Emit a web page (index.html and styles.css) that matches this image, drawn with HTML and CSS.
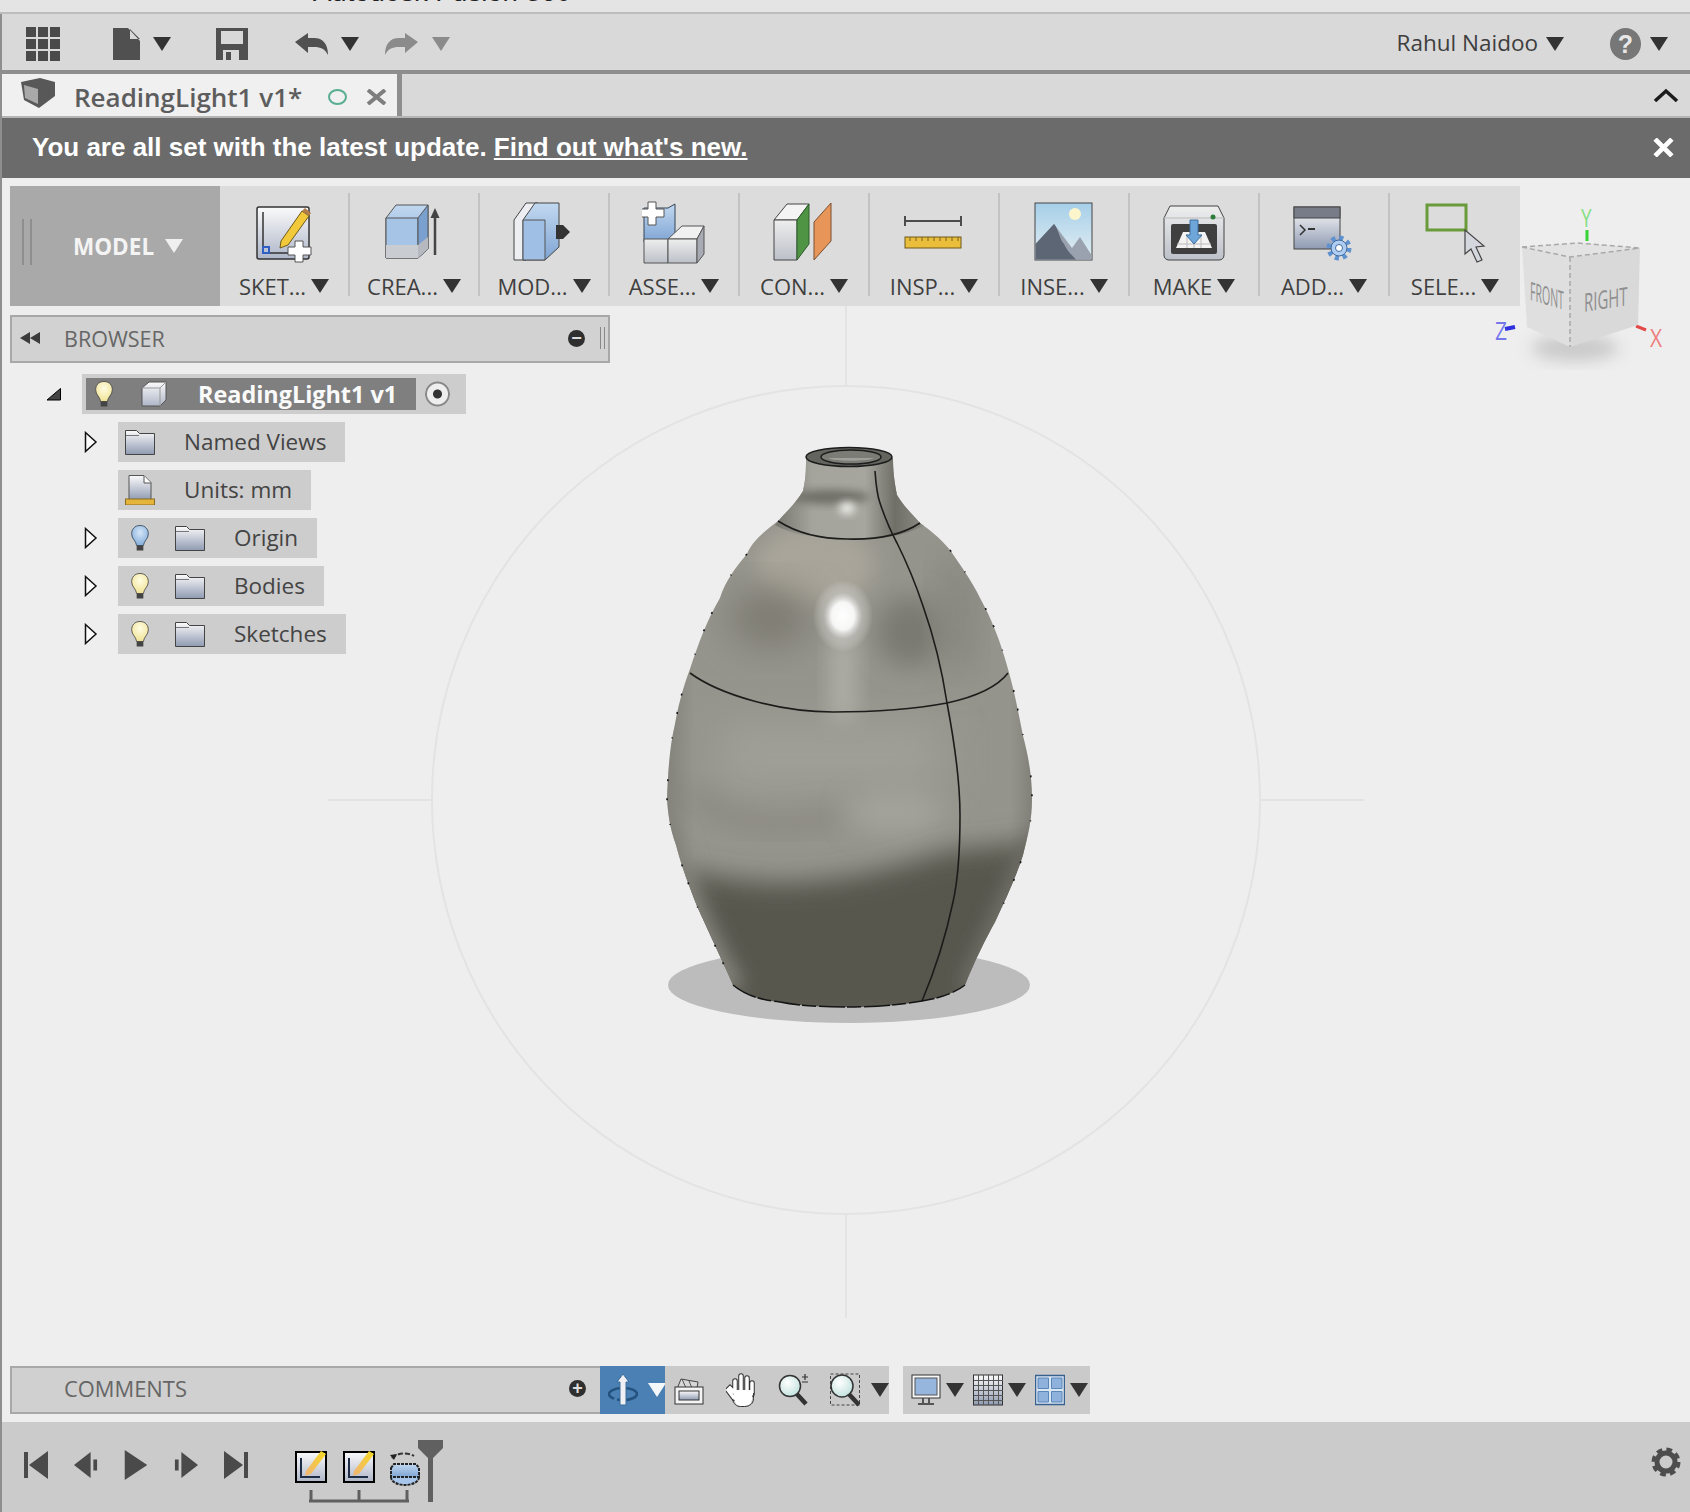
FILE: index.html
```html
<!DOCTYPE html>
<html lang="en">
<head>
<meta charset="utf-8">
<title>Autodesk Fusion 360</title>
<link rel="stylesheet" href="styles.css">
</head>
<body>
<svg class="defs" aria-hidden="true">
  <defs>
    <linearGradient id="gSteel" x1="0" y1="0" x2="0" y2="1"><stop offset="0" stop-color="#fafafa"/><stop offset="1" stop-color="#aeb6c8"/></linearGradient>
    <linearGradient id="gFolder" x1="0" y1="0" x2="0" y2="1"><stop offset="0" stop-color="#fbfbfb"/><stop offset="1" stop-color="#8f9ab2"/></linearGradient>
    <linearGradient id="gBlue" x1="0" y1="0" x2="0" y2="1"><stop offset="0" stop-color="#c2d8f0"/><stop offset="1" stop-color="#7fa5d4"/></linearGradient>
    <linearGradient id="gGrey" x1="0" y1="0" x2="0" y2="1"><stop offset="0" stop-color="#eeeeee"/><stop offset="1" stop-color="#bcc0c8"/></linearGradient>
    <linearGradient id="gSky" x1="0" y1="0" x2="0" y2="1"><stop offset="0" stop-color="#a6cfe9"/><stop offset="1" stop-color="#e4eef2"/></linearGradient>
    <linearGradient id="gPencil" x1="0" y1="1" x2="1" y2="0"><stop offset="0" stop-color="#f0b27a"/><stop offset="1" stop-color="#f6d91f"/></linearGradient>
    <radialGradient id="gBulbY" cx=".5" cy=".35" r=".7"><stop offset="0" stop-color="#fffde4"/><stop offset="1" stop-color="#efe08e"/></radialGradient>
    <radialGradient id="gBulbB" cx=".5" cy=".35" r=".7"><stop offset="0" stop-color="#d5e6f7"/><stop offset="1" stop-color="#7ea9d8"/></radialGradient>
    <radialGradient id="gLens" cx=".4" cy=".35" r=".7"><stop offset="0" stop-color="#ffffff"/><stop offset="1" stop-color="#bfe0dc"/></radialGradient>

    <symbol id="bulbY" viewBox="0 0 24 32"><path d="M12 1C5 1 2 6 2 11c0 6 5 8 6 14h8c1-6 6-8 6-14C22 6 19 1 12 1z" fill="url(#gBulbY)" stroke="#444" stroke-width="1"/><rect x="8" y="25" width="8" height="6" fill="#444"/></symbol>
    <symbol id="bulbB" viewBox="0 0 24 32"><path d="M12 1C5 1 2 6 2 11c0 6 5 8 6 14h8c1-6 6-8 6-14C22 6 19 1 12 1z" fill="url(#gBulbB)" stroke="#345" stroke-width="1"/><rect x="8" y="25" width="8" height="6" fill="#444"/></symbol>
    <symbol id="folder" viewBox="0 0 30 26"><path d="M.5 25.500V1.500h11l3 3h15v21z" fill="url(#gFolder)" stroke="#444"/><path d="M1 6.500h13" stroke="#777" fill="none"/></symbol>
    <symbol id="tinyArrow" viewBox="0 0 14 22"><path d="M1.500 1.500L12 11 1.500 20.500z" fill="#fafafa" stroke="#111" stroke-width="1.500"/></symbol>
    <symbol id="fusionSketch" viewBox="0 0 32 34"><rect x="1" y="3" width="30" height="30" fill="url(#gSteel)" stroke="#000" stroke-width="2"/><path d="M6 9v19h19" fill="none" stroke="#1d2c44" stroke-width="2"/><path d="M11 22L26 2l5 3-15 20-6 2z" fill="url(#gPencil)"/></symbol>
  </defs>
</svg>

<div class="page">
  <svg class="scene" viewBox="0 0 1690 1512" aria-hidden="true">
    <defs>
      <clipPath id="vaseClip"><path d="M806 458C806 470 806 478 803 491C796 503 786 512 778 521C762 533 752 542 747 554C735 568 725 582 720 598C706 622 698 645 690 669C682 690 678 708 675 724C670 745 668 770 667 799C668 815 670 828 676 845C682 868 690 888 697 906C710 935 722 960 733 985C745 995 760 1000 780 1002C800 1006 825 1007 847 1007C875 1007 900 1005 922 1001C940 998 955 993 965 985C975 960 985 940 995 922C1005 900 1015 880 1023 855C1028 835 1032 820 1032 799C1032 775 1028 755 1023 736C1018 710 1014 690 1008 669C1000 640 992 620 980 598C970 578 960 565 950 550C940 538 930 530 920 523C910 512 903 505 897 495C894 480 893 470 893 458z"/></clipPath>
      <filter id="b4" x="-50%" y="-50%" width="200%" height="200%"><feGaussianBlur stdDeviation="4"/></filter>
      <filter id="b10" x="-50%" y="-50%" width="200%" height="200%"><feGaussianBlur stdDeviation="10"/></filter>
      <filter id="b14" x="-50%" y="-50%" width="200%" height="200%"><feGaussianBlur stdDeviation="13"/></filter>
      <filter id="b18" x="-50%" y="-50%" width="200%" height="200%"><feGaussianBlur stdDeviation="20"/></filter>
      <linearGradient id="vaseSides" x1="0" y1="0" x2="1" y2="0"><stop offset="0" stop-color="#66655f" stop-opacity=".5"/><stop offset=".09" stop-color="#66655f" stop-opacity=".05"/><stop offset=".92" stop-color="#66655f" stop-opacity=".05"/><stop offset="1" stop-color="#55544f" stop-opacity=".5"/></linearGradient>
      <linearGradient id="vaseNeck" x1="0" y1="0" x2="1" y2="0"><stop offset="0" stop-color="#777770"/><stop offset=".25" stop-color="#a4a49d"/><stop offset=".6" stop-color="#a6a69f"/><stop offset=".8" stop-color="#6f6f68"/><stop offset="1" stop-color="#8c8c85"/></linearGradient>
      <radialGradient id="vaseGlow"><stop offset="0" stop-color="#ffffff"/><stop offset=".38" stop-color="#ffffff" stop-opacity=".92"/><stop offset=".65" stop-color="#dddddb" stop-opacity=".4"/><stop offset="1" stop-color="#ffffff" stop-opacity="0"/></radialGradient>
    </defs>
    <circle class="guide" cx="846" cy="800" r="414"/>
    <path class="guide" d="M328 800H432M1260 800H1364M846 306V385M846 1215V1318"/>
    <ellipse cx="849" cy="985" rx="181" ry="38" fill="#bcbcbc"/>
    <g clip-path="url(#vaseClip)">
      <rect x="660" y="440" width="380" height="580" fill="#98978f"/>
      <ellipse cx="815" cy="565" rx="60" ry="40" fill="#aca89e" filter="url(#b10)"/>
      <ellipse cx="770" cy="618" rx="42" ry="28" fill="#7b7970" filter="url(#b18)"/>
      <ellipse cx="910" cy="632" rx="34" ry="36" fill="#7b7a72" filter="url(#b14)"/>
      <rect x="940" y="560" width="34" height="110" fill="#85857e" filter="url(#b18)"/>
      <rect x="720" y="725" width="220" height="60" fill="#a3a29b" filter="url(#b18)"/>
      <path d="M690 790C730 830 790 830 840 815" fill="none" stroke="#8b8980" stroke-width="16" filter="url(#b14)"/>
      <ellipse cx="895" cy="812" rx="48" ry="22" fill="#a6a69f" filter="url(#b14)"/>
      <path d="M650 868C700 868 730 884 790 882C860 880 910 862 950 850L1050 840V1030H650z" fill="#57564d" filter="url(#b14)"/>
      <path d="M668 830C685 900 710 950 734 990" fill="none" stroke="#8e8d85" stroke-width="22" filter="url(#b10)"/>
      <path d="M1030 850C1010 900 985 950 968 990" fill="none" stroke="#7e7d76" stroke-width="14" filter="url(#b10)"/>
      <rect x="660" y="440" width="380" height="580" fill="url(#vaseSides)"/>
      <rect x="830" y="640" width="26" height="80" fill="#adada6" filter="url(#b10)"/>
      <path d="M800 450H896V490C905 505 915 515 925 525C890 545 810 545 775 525C785 513 796 503 803 490z" fill="url(#vaseNeck)"/>
      <ellipse cx="830" cy="497" rx="40" ry="7" fill="#6e6d66" filter="url(#b4)"/>
      <ellipse cx="847" cy="508" rx="8" ry="6" fill="#f4f4f0" filter="url(#b4)"/>
      <ellipse cx="843" cy="616" rx="30" ry="36" fill="url(#vaseGlow)"/>
    </g>
    <ellipse cx="849" cy="457" rx="43" ry="9.500" fill="#64645f" stroke="#1c1c1c" stroke-width="1.500"/>
    <ellipse cx="851" cy="457" rx="30" ry="7" fill="#7c7c76" stroke="#1c1c1c" stroke-width="1.500"/>
    <path d="M828 458A24 4 0 0 0 874 458" fill="#a0a09a"/>
    <path class="seam" d="M778 521C800 535 825 539 847 539C880 540 905 533 920 523"/>
    <path class="seam" d="M690 673C720 695 780 712 833 712C880 712 920 708 947 703C970 698 995 690 1008 673"/>
    <path class="seam" d="M875 471C876 485 877 495 880 503C885 518 890 530 897 543C908 565 916 585 923 606C935 640 942 670 947 703C954 740 960 780 960 815C960 850 958 880 953 902C945 940 933 975 922 1001"/>
    <path class="edge" d="M747 554C735 568 725 582 720 598C706 622 698 645 690 669C682 690 678 708 675 724C670 745 668 770 667 799C668 815 670 828 676 845C682 868 690 888 697 906C710 935 722 960 733 985"/>
    <path class="edge" d="M950 550C960 565 970 578 980 598C992 620 1000 640 1008 669C1014 690 1018 710 1023 736C1028 755 1032 775 1032 799C1032 820 1028 835 1023 855C1015 880 1005 900 995 922"/>
    <path class="base" d="M733 985C745 995 760 1000 780 1002C800 1006 825 1007 847 1007C875 1007 900 1005 922 1001C940 998 955 993 965 985"/>
  </svg>

  <svg class="cube" viewBox="1490 200 190 170" aria-label="View cube">
    <defs><filter id="cubeShadow" x="-50%" y="-50%" width="200%" height="200%"><feGaussianBlur stdDeviation="8"/></filter></defs>
    <ellipse cx="1575" cy="348" rx="44" ry="13" fill="#a4a4a4" opacity=".5" filter="url(#cubeShadow)"/>
    <path d="M1587 241V230" stroke="#36d436" stroke-width="3"/>
    <path d="M1515 327l-10 2" stroke="#2f2fe0" stroke-width="4"/>
    <path d="M1636 326l10 4" stroke="#e24a4a" stroke-width="3"/>
    <path d="M1522 247L1578 243L1640 248L1570 257z" fill="#e3e3e3"/>
    <path d="M1522 247L1570 257L1570 347L1527 327z" fill="#dfdfdf"/>
    <path d="M1570 257L1640 248L1638 325L1570 347z" fill="#d9d9d9"/>
    <path d="M1522 247L1570 257L1640 248M1570 257V347M1522 247L1578 243L1640 248" fill="none" stroke="#a9a9a9" stroke-width="1.500" stroke-dasharray="5 3"/>
    <text class="cube-face" transform="translate(1530 300) matrix(.62 .18 0 1.500 0 0)">FRONT</text>
    <text class="cube-face" transform="translate(1584 312) matrix(.88 -.14 0 1.500 0 0)">RIGHT</text>
    <text class="cube-axis cube-y" transform="translate(1581 227) scale(.9 1.200)">Y</text>
    <text class="cube-axis cube-z" transform="translate(1495 340) scale(1 1.200)">Z</text>
    <text class="cube-axis cube-x" transform="translate(1650 347) scale(1 1.200)">X</text>
  </svg>

  <div class="title"><span class="title-text">Autodesk Fusion 360</span></div>

  <div class="shell">
    <header class="appbar">
      <svg class="ic-grid" viewBox="0 0 34 34" aria-hidden="true"><path d="M0 0h10v10H0zM12 0h10v10H12zM24 0h10v10H24zM0 12h10v10H0zM12 12h10v10H12zM24 12h10v10H24zM0 24h10v10H0zM12 24h10v10H12zM24 24h10v10H24z" fill="#4a4a4a"/></svg>
      <svg class="ic-file" viewBox="0 0 27 32" aria-hidden="true"><path d="M0 0h15l12 13v19H0zM17 1v10h10z" fill="#505050" fill-rule="evenodd"/></svg>
      <span class="arrow arrow-file"></span>
      <svg class="ic-save" viewBox="0 0 32 32" aria-hidden="true"><path d="M0 0h32v32H0zM5 3v13h22V3zM7 22v10h16V22zM10 24h5v8h-5z" fill="#505050" fill-rule="evenodd"/></svg>
      <svg class="ic-undo" viewBox="0 0 33 22" aria-hidden="true"><path d="M0 9L13 0v5h6c9 0 14 6 14 17-3-6-7-8-14-8h-6v6z" fill="#505050"/></svg>
      <span class="arrow arrow-undo"></span>
      <svg class="ic-redo" viewBox="0 0 33 22" aria-hidden="true"><path d="M33 9L20 0v5h-6C5 5 0 11 0 22c3-6 7-8 14-8h6v6z" fill="#8b8b8b"/></svg>
      <span class="arrow arrow-redo"></span>
      <span class="user">Rahul Naidoo</span>
      <span class="arrow arrow-user"></span>
      <span class="help">?</span>
      <span class="arrow arrow-help"></span>
    </header>

    <div class="tabs">
      <div class="tab">
        <svg class="ic-doc" viewBox="0 0 34 30" aria-hidden="true"><path d="M0 4L19 0l15 4v14L18 30 3 22z" fill="#585858"/><path d="M3 7l14 4v15L4 20z" fill="#a9a9a9"/></svg>
        <span class="tab-name">ReadingLight1 v1*</span>
        <span class="tab-dot"></span>
        <svg class="ic-close" viewBox="0 0 21 16" aria-hidden="true"><path d="M2 1l17 14M19 1L2 15" stroke="#7e7e7e" stroke-width="4" fill="none"/></svg>
      </div>
      <svg class="ic-chevron" viewBox="0 0 26 14" aria-hidden="true"><path d="M2 13L13 3l11 10" stroke="#1c1c1c" stroke-width="3.500" fill="none"/></svg>
    </div>

    <div class="banner">
      <span>You are all set with the latest update. <a class="banner-link" href="#">Find out what's new.</a></span>
      <svg class="ic-banner-close" viewBox="0 0 20 18" aria-hidden="true"><path d="M2 1l16 16M18 1L2 17" stroke="#fff" stroke-width="4.500" fill="none"/></svg>
    </div>

    <main class="main">
      <div class="toolbar">
        <div class="mode"><span class="grip"></span><span class="mode-name">MODEL</span><span class="arrow arrow-light"></span></div>

        <div class="tool"><svg class="tool-ic" viewBox="0 0 64 64" aria-hidden="true">
          <rect x="5" y="7" width="52" height="52" rx="2" fill="url(#gSteel)" stroke="#333" stroke-width="1.500"/>
          <path d="M11 12V53H37" fill="none" stroke="#333" stroke-width="1.500"/><rect x="11" y="47" width="6" height="6" fill="none" stroke="#2f5fc4" stroke-width="2"/>
          <path d="M29 41L50 11l7 5-21 29-8 3z" fill="#f1c93a" stroke="#6d5a1a"/><path d="M50 11l3-3 6 5-2 3z" fill="#b07c4a"/>
          <path d="M43 41h8v6h8v8h-8v7h-8v-7h-7v-8h7z" fill="#fff" stroke="#555"/>
        </svg><div class="tool-label"><span>SKET...</span><span class="arrow"></span></div></div>

        <div class="tool"><svg class="tool-ic" viewBox="0 0 64 64" aria-hidden="true">
          <path d="M4 18L14 5h32v44L36 58H4z" fill="url(#gBlue)" stroke="#555"/><path d="M4 18H36V58H4z" fill="#a5c4e6" stroke="#555"/><path d="M36 18L46 5v44L36 58z" fill="#7aa0cf" stroke="#555"/><rect x="4" y="45" width="32" height="13" fill="#c9ccd1"/><path d="M36 45l10-8v12L36 58z" fill="#b6b9bf"/>
          <path d="M53 55V15" stroke="#444" stroke-width="2.500"/><path d="M53 8l4.500 10h-9z" fill="#444"/>
        </svg><div class="tool-label"><span>CREA...</span><span class="arrow"></span></div></div>

        <div class="tool"><svg class="tool-ic" viewBox="0 0 64 64" aria-hidden="true">
          <path d="M2 20L14 3h12L14 20V60H2z" fill="#eceef2" stroke="#444"/><path d="M11 20L23 3h24v44L33 60H11z" fill="url(#gBlue)" stroke="#444"/><path d="M11 20H33V60H11z" fill="#9fbfe4" stroke="#555"/>
          <path d="M44 25h7l7 7-7 7h-7z" fill="#333"/>
        </svg><div class="tool-label"><span>MOD...</span><span class="arrow"></span></div></div>

        <div class="tool"><svg class="tool-ic" viewBox="0 0 64 64" aria-hidden="true">
          <path d="M2 8h24l7-4v32l-7 6H2z" fill="url(#gBlue)" stroke="#345"/><path d="M2 40H26V64H2z" fill="url(#gGrey)" stroke="#555" transform="translate(0 -1)"/><path d="M26 39l14-13h22l-7 13H26z" fill="#f1f1f1" stroke="#555"/><path d="M26 39H55V63H26z" fill="url(#gGrey)" stroke="#555"/><path d="M55 39l7-13v28l-7 9z" fill="#a8abb3" stroke="#555"/>
          <path d="M6 2h8v7h8v8h-8v8H6v-8h-7V9h7z" fill="#fff" stroke="#555"/>
        </svg><div class="tool-label"><span>ASSE...</span><span class="arrow"></span></div></div>

        <div class="tool"><svg class="tool-ic" viewBox="0 0 64 64" aria-hidden="true">
          <path d="M2 20L15 4h22L25 20z" fill="#f4f4f4" stroke="#444"/><path d="M2 20H25V60H2z" fill="url(#gGrey)" stroke="#444"/><path d="M25 20L37 4v40L25 60z" fill="#4f9445" stroke="#2e5d2a"/>
          <path d="M42 60V22L59 3v38z" fill="#e8955a" stroke="#7a5030"/>
        </svg><div class="tool-label"><span>CON...</span><span class="arrow"></span></div></div>

        <div class="tool"><svg class="tool-ic" viewBox="0 0 64 64" aria-hidden="true">
          <path d="M3 16V26M3 21H59M59 16V26" stroke="#4c4c4c" stroke-width="2" fill="none"/><rect x="3" y="37" width="56" height="11" fill="#eabd3a" stroke="#6f5a1a"/><path d="M8 37v4M14 37v4M20 37v4M26 37v4M32 37v4M38 37v4M44 37v4M50 37v4M56 37v4" stroke="#7b6320"/>
        </svg><div class="tool-label"><span>INSP...</span><span class="arrow"></span></div></div>

        <div class="tool"><svg class="tool-ic" viewBox="0 0 64 64" aria-hidden="true">
          <rect x="3" y="3" width="57" height="57" fill="url(#gSky)" stroke="#444"/><circle cx="43" cy="14" r="6" fill="#fdf6cc"/>
          <path d="M3.500 59.500V44L22 24l18 24 8-11 11.500 18v4.500z" fill="#9aa2af"/><path d="M3.500 59.500V44L22 24c5 6 5 14 10 20 3 7 8 11 12 15.500z" fill="#5d6675"/>
        </svg><div class="tool-label"><span>INSE...</span><span class="arrow"></span></div></div>

        <div class="tool"><svg class="tool-ic" viewBox="0 0 64 64" aria-hidden="true">
          <path d="M2 18L8 6h48l6 12v37c0 3-2 5-5 5H7c-3 0-5-2-5-5z" fill="url(#gGrey)" stroke="#444"/><path d="M2 18H62" stroke="#bbb"/><circle cx="51" cy="17" r="2.500" fill="#2f7d3b"/>
          <rect x="9" y="24" width="46" height="30" rx="2" fill="#3f3f3f"/><path d="M14 48l7-16h22l7 16z" fill="#f3f3f3"/><path d="M15 44H49M25 34v14M32 34v14M39 34v14" stroke="#bbb"/>
          <path d="M28 20h8v15h4l-8 9-8-9h4z" fill="#6fa6da" stroke="#3c6ea0"/>
        </svg><div class="tool-label"><span>MAKE</span><span class="arrow"></span></div></div>

        <div class="tool"><svg class="tool-ic" viewBox="0 0 64 64" aria-hidden="true">
          <rect x="2" y="7" width="46" height="42" fill="url(#gFolder)" stroke="#444"/><rect x="2" y="7" width="46" height="11" fill="#777c88" stroke="#444"/><path d="M8 25l5 5-5 5" fill="none" stroke="#333" stroke-width="1.500"/><path d="M16 29h7" stroke="#333" stroke-width="2"/>
          <circle cx="47" cy="48" r="10" fill="none" stroke="#5d91cf" stroke-width="5" stroke-dasharray="4 3.850"/><circle cx="47" cy="48" r="8" fill="#aecdf0" stroke="#3e6a9e"/><circle cx="47" cy="48" r="3.500" fill="#fff" stroke="#3e6a9e"/>
        </svg><div class="tool-label"><span>ADD...</span><span class="arrow"></span></div></div>

        <div class="tool tool-last"><svg class="tool-ic" viewBox="0 0 64 64" aria-hidden="true">
          <rect x="4" y="5" width="39" height="25" fill="none" stroke="#6a9b3a" stroke-width="3"/>
          <path d="M42 30V54L48 49L54 62L59 60L53 47L61 46z" fill="#d5d7de" stroke="#444" stroke-width="1.200"/>
        </svg><div class="tool-label"><span>SELE...</span><span class="arrow"></span></div></div>
      </div>

      <div class="browser-head">
        <svg class="ic-rewind" viewBox="0 0 20 12" aria-hidden="true"><path d="M0 6l10-6v12zM10 6l10-6v12z" fill="#3c3c3c"/></svg>
        <span class="dock-title">BROWSER</span>
        <span class="round-btn">−</span>
        <span class="mini-grip"></span>
      </div>

      <ul class="tree">
        <li class="tree-row tree-root-row">
          <svg class="twist" viewBox="0 0 16 14" aria-hidden="true"><path d="M1 13L14.500 1.500V13z" fill="#444" stroke="#000"/></svg>
          <div class="root-outer">
            <div class="root-inner">
              <svg class="ic-bulb" aria-hidden="true"><use href="#bulbY"/></svg>
              <svg class="ic-comp" viewBox="0 0 26 26" aria-hidden="true"><path d="M1 7L8 1h17v18l-6 6H1z" fill="url(#gSteel)" stroke="#555"/><path d="M1 7H19V25M19 7l6-6" fill="none" stroke="#999"/></svg>
              <span class="root-name">ReadingLight1 v1</span>
            </div>
            <span class="radio"></span>
          </div>
        </li>
        <li class="tree-row"><svg class="twist-open" aria-hidden="true"><use href="#tinyArrow"/></svg><div class="node"><svg class="ic-folder" aria-hidden="true"><use href="#folder"/></svg><span class="node-text">Named Views</span></div></li>
        <li class="tree-row tree-noarrow"><div class="node"><svg class="ic-units" viewBox="0 0 30 30" aria-hidden="true"><path d="M4 .5h15l7 7V25H4z" fill="url(#gFolder)" stroke="#555"/><path d="M19 1v7h7" fill="#fff" stroke="#555"/><rect x=".5" y="24" width="29" height="6" fill="#e5b43a" stroke="#8a6c22"/></svg><span class="node-text">Units: mm</span></div></li>
        <li class="tree-row"><svg class="twist-open" aria-hidden="true"><use href="#tinyArrow"/></svg><div class="node"><svg class="ic-bulb ic-bulb-node" aria-hidden="true"><use href="#bulbB"/></svg><svg class="ic-folder ic-folder-lit" aria-hidden="true"><use href="#folder"/></svg><span class="node-text">Origin</span></div></li>
        <li class="tree-row"><svg class="twist-open" aria-hidden="true"><use href="#tinyArrow"/></svg><div class="node"><svg class="ic-bulb ic-bulb-node" aria-hidden="true"><use href="#bulbY"/></svg><svg class="ic-folder ic-folder-lit" aria-hidden="true"><use href="#folder"/></svg><span class="node-text">Bodies</span></div></li>
        <li class="tree-row"><svg class="twist-open" aria-hidden="true"><use href="#tinyArrow"/></svg><div class="node"><svg class="ic-bulb ic-bulb-node" aria-hidden="true"><use href="#bulbY"/></svg><svg class="ic-folder ic-folder-lit" aria-hidden="true"><use href="#folder"/></svg><span class="node-text">Sketches</span></div></li>
      </ul>

      <div class="dock">
        <div class="comments">
          <span class="dock-title">COMMENTS</span>
          <span class="round-btn">+</span>
        </div>
        <div class="orbit">
          <svg class="nav-ic" viewBox="0 0 30 34" aria-hidden="true"><ellipse cx="15" cy="21" rx="14" ry="6" fill="none" stroke="#24527f" stroke-width="2.500" stroke-dasharray="22 3"/><path d="M15 1l6 8h-3v23h-6V9H9z" fill="#f0f0f4" stroke="#3b6c9c"/></svg>
          <span class="arrow arrow-white"></span>
        </div>
        <div class="nav-panel">
          <svg class="nav-ic" viewBox="0 0 30 30" aria-hidden="true"><path d="M3 14L7 4l17 3-1 6" fill="#d7d7d7" stroke="#444"/><path d="M8 4l4 9M15 6l3 7" stroke="#555"/><rect x="1" y="12" width="28" height="17" fill="#f4f4f4" stroke="#333"/><rect x="5" y="16" width="20" height="9" fill="url(#gFolder)" stroke="#333"/></svg>
          <svg class="nav-ic" viewBox="0 0 30 34" aria-hidden="true"><path d="M8 25L2 17l2-2 5 5V8M9 20V8M15 18V3M21 20V5M26 21V10" stroke="#333" stroke-width="5.500" stroke-linecap="round" fill="none"/><path d="M8 25L2 17l2-2 5 5V8M15 18V3M21 20V5M26 21V10" stroke="#fff" stroke-width="3.500" stroke-linecap="round" fill="none"/><path d="M8 17h18v8c0 5-3 8-8 8h-4c-3 0-5-3-6-8z" fill="#fff"/><path d="M6.500 26c1 5 4 7.500 8 7.500h4c5 0 9-3 9-8V20" fill="none" stroke="#333"/></svg>
          <svg class="nav-ic" viewBox="0 0 30 34" aria-hidden="true"><path d="M17 19L28 31" stroke="#333" stroke-width="4.500"/><circle cx="12" cy="13" r="10.500" fill="url(#gLens)" stroke="#333" stroke-width="1.500"/><path d="M24 4h6M27 1v6M24 9h6" stroke="#333" stroke-width="1.200" fill="none"/></svg>
          <svg class="nav-ic" viewBox="0 0 30 34" aria-hidden="true"><rect x=".5" y="1" width="29" height="31" fill="none" stroke="#444" stroke-dasharray="3 2"/><path d="M17 19L29 32" stroke="#333" stroke-width="4.500"/><circle cx="12" cy="13" r="11" fill="url(#gLens)" stroke="#333" stroke-width="1.500"/></svg>
          <span class="arrow"></span>
        </div>
        <div class="view-panel">
          <svg class="nav-ic" viewBox="0 0 30 32" aria-hidden="true"><rect x="1" y="1" width="28" height="23" fill="#f7f7f7" stroke="#333"/><rect x="4" y="4" width="22" height="17" fill="#97b6de" stroke="#555"/><path d="M12 24v5M18 24v5M7 30h16" stroke="#555" stroke-width="2"/></svg>
          <span class="arrow"></span>
          <svg class="nav-ic" viewBox="0 0 30 32" aria-hidden="true"><rect x=".5" y="1" width="29" height="30" fill="url(#gFolder)" stroke="#333"/><path d="M5.500 1v30M10.500 1v30M15.500 1v30M20.500 1v30M25.500 1v30M1 6.500h29M1 11.500h29M1 16.500h29M1 21.500h29M1 26.500h29" stroke="#555"/></svg>
          <span class="arrow"></span>
          <svg class="nav-ic" viewBox="0 0 30 30" aria-hidden="true"><rect x=".5" y=".5" width="29" height="29" fill="#dbe6f3" stroke="#38618f" stroke-width="1.500"/><path d="M3 3h10.500v10.500H3zM16.500 3H27v10.500H16.500zM3 16.500h10.500V27H3zM16.500 16.500H27V27H16.500z" fill="#8fb2dc" stroke="#5b86b8"/></svg>
          <span class="arrow"></span>
        </div>
      </div>

      <footer class="timeline">
        <svg class="tl-btn" viewBox="0 0 24 30" aria-hidden="true"><path d="M0 2h4v26H0zM24 1v28L5 15z" fill="#4a4a4a"/></svg>
        <svg class="tl-btn" viewBox="0 0 26 30" aria-hidden="true"><path d="M18 1v28L0 15zM21 9h4v12h-4z" fill="#4a4a4a"/></svg>
        <svg class="tl-btn" viewBox="0 0 24 32" aria-hidden="true"><path d="M0 0l24 16L0 32z" fill="#4a4a4a"/></svg>
        <svg class="tl-btn" viewBox="0 0 26 30" aria-hidden="true"><path d="M8 1v28l18-14zM1 9h4v12H1z" fill="#4a4a4a"/></svg>
        <svg class="tl-btn" viewBox="0 0 24 30" aria-hidden="true"><path d="M20 2h4v26h-4zM0 1v28l19-14z" fill="#4a4a4a"/></svg>
        <svg class="tl-track" viewBox="0 0 150 66" aria-hidden="true">
          <use href="#fusionSketch" width="32" height="34" y="11"/>
          <use href="#fusionSketch" width="32" height="34" x="48" y="11"/>
          <path d="M97 20c4-5 16-6 22-2" fill="none" stroke="#333" stroke-width="2" stroke-dasharray="5 2"/><path d="M95 17l7-1-3 6z" fill="#222"/>
          <ellipse cx="110" cy="39" rx="14" ry="8" fill="#a8c6ea" stroke="#222" stroke-width="2" stroke-dasharray="3 1"/><path d="M96 30l3-4h22l3 4v9H96z" fill="url(#gBlue)" stroke="#222" stroke-width="2" stroke-dasharray="3 1"/>
          <path d="M16 52v12M64 52v12M112 52v12M14 63h100" stroke="#606060" stroke-width="3" fill="none"/>
          <path d="M123 2h25v8l-10 10v44h-5V20l-10-10z" fill="#606060"/>
        </svg>
        <svg class="tl-gear" viewBox="0 0 30 30" aria-hidden="true"><circle cx="15" cy="15" r="11" fill="none" stroke="#4d4d4d" stroke-width="7" stroke-dasharray="5 3.640"/><circle cx="15" cy="15" r="9" fill="none" stroke="#4d4d4d" stroke-width="5"/></svg>
      </footer>
    </main>
  </div>
</div>
</body>
</html>
```

FILE: styles.css
```css
* { box-sizing: border-box; }
html, body { margin: 0; padding: 0; }
body { width: 1690px; height: 1512px; overflow: hidden; font-family: "Open Sans", "Noto Sans", sans-serif; color: #444; }

.defs { position: absolute; width: 0; height: 0; }

.page { position: relative; z-index: 0; width: 1690px; height: 1512px; background: #eeeeee; display: flex; flex-direction: column; overflow: hidden; }
.scene { position: absolute; left: 0; top: 0; width: 1690px; height: 1512px; z-index: -1; }
.guide { fill: none; stroke: #e3e3e3; stroke-width: 2; }
.seam { fill: none; stroke: #1c1c1a; stroke-width: 1.6; }
.edge { fill: none; stroke: #141414; stroke-width: 1.6; stroke-dasharray: 2 24 1 41 2 17; }
.base { fill: none; stroke: #141414; stroke-width: 1.5; stroke-dasharray: 26 2 14 3; }

.cube { position: absolute; left: 1490px; top: 200px; width: 190px; height: 170px; }
.cube-face { font-family: "Open Sans", sans-serif; font-size: 17px; fill: #8f8f8f; }
.cube-axis { font-family: "Open Sans", sans-serif; font-size: 21px; }
.cube-y { fill: #83e083; }
.cube-z { fill: #7676ec; }
.cube-x { fill: #ee7f7f; }

.title { height: 14px; flex: none; background: #e4e4e4; border-bottom: 2px solid #bdbdbd; overflow: hidden; padding-left: 313px; }
.title-text { display: block; font-size: 27.500px; line-height: 30px; margin-top: -23px; color: #222; font-family: "Liberation Sans", sans-serif; }

.shell { flex: 1; min-height: 0; display: flex; flex-direction: column; border-left: 2px solid #8e8e8e; }

.arrow { flex: none; width: 0; height: 0; border-left: 9px solid transparent; border-right: 9px solid transparent; border-top: 14px solid #333; }
.arrow-light { border-top-color: #f0f0f0; margin-left: 11px; }
.arrow-white { border-top-color: #f4f8fb; margin-left: 10px; }

.appbar { height: 60px; flex: none; display: flex; align-items: center; background: #d9d9d9; border-bottom: 4px solid #8e8e8e; padding: 4px 0 0 24px; }
.ic-grid { width: 34px; height: 34px; }
.ic-file { width: 27px; height: 32px; margin-left: 53px; }
.arrow-file { margin-left: 13px; }
.ic-save { width: 32px; height: 32px; margin-left: 45px; }
.ic-undo { width: 33px; height: 22px; margin-left: 47px; }
.arrow-undo { margin-left: 13px; }
.ic-redo { width: 33px; height: 22px; margin-left: 26px; }
.arrow-redo { margin-left: 14px; border-top-color: #8b8b8b; }
.user { margin: -4px 0 0 auto; font-size: 22.500px; color: #3e3e3e; }
.arrow-user { margin-left: 8px; }
.help { margin-left: 46px; width: 31px; height: 32px; border-radius: 50%; background: #777; color: #e8e8e8; font: bold 25px/32px "Liberation Sans", sans-serif; text-align: center; }
.arrow-help { margin-left: 9px; margin-right: 22px; }

.tabs { height: 44px; flex: none; display: flex; align-items: stretch; background: #d9d9d9; border-bottom: 2px solid #b5b5b5; }
.tab { width: 400px; display: flex; align-items: center; background: #f0f0f0; border-right: 5px solid #8e8e8e; padding: 4px 0 0 19px; }
.ic-doc { width: 34px; height: 30px; flex: none; margin-top: -8px; }
.tab-name { margin-left: 19px; font-size: 26px; font-weight: 600; color: #5d5d5d; white-space: nowrap; }
.tab-dot { flex: none; width: 19px; height: 16px; border: 2px solid #58ad92; border-radius: 50%; margin-left: 26px; }
.ic-close { flex: none; width: 21px; height: 16px; margin-left: 19px; }
.ic-chevron { width: 26px; height: 14px; margin: auto 11px auto auto; }

.banner { height: 60px; flex: none; display: flex; align-items: center; justify-content: space-between; background: #6b6b6b; padding: 0 16px 2px 30px; color: #fff; font: bold 26px "Liberation Sans", sans-serif; }
.banner-link { color: #fff; text-decoration: underline; }
.ic-banner-close { width: 21px; height: 19px; }

.main { flex: 1; min-height: 0; display: flex; flex-direction: column; }

.toolbar { flex: none; width: 1510px; height: 120px; margin: 8px 0 0 8px; display: flex; background: #dcdcdc; }
.mode { flex: none; width: 210px; display: flex; align-items: center; background: #a9a9a9; color: #f4f4f4; padding-left: 12px; }
.grip { width: 10px; height: 46px; border-left: 2px solid #8e8e8e; border-right: 2px solid #8e8e8e; margin-top: -8px; }
.mode-name { margin-left: 41px; font-size: 22.500px; font-weight: 700; }

.tool { flex: none; width: 130px; height: 103px; margin-top: 7px; padding-top: 7px; border-right: 2px solid #c3c3c3; display: flex; flex-direction: column; align-items: center; }
.tool-last { border-right: 0; }
.tool-ic { width: 64px; height: 64px; flex: none; }
.tool-label { display: flex; align-items: center; gap: 5px; margin-top: 9px; font-size: 22px; line-height: 26px; color: #3f3f3f; }

.browser-head { flex: none; width: 600px; height: 48px; margin: 9px 0 0 8px; display: flex; align-items: center; background: #d2d2d2; border: 2px solid #a8a8a8; padding: 0 0 2px 8px; }
.ic-rewind { width: 20px; height: 12px; flex: none; }
.dock-title { margin-left: 24px; font-size: 21.500px; color: #666; }
.round-btn { flex: none; margin-left: auto; width: 17px; height: 17px; border-radius: 50%; background: #2f2f2f; color: #ddd; font: bold 18px/16px "Liberation Sans", sans-serif; text-align: center; }
.mini-grip { flex: none; width: 5px; height: 22px; border-left: 1px solid #888; border-right: 1px solid #888; margin: 0 3px 0 15px; }

.tree { list-style: none; margin: 11px 0 0; padding: 0; display: flex; flex-direction: column; gap: 8px; }
.tree-row { display: flex; align-items: center; height: 40px; padding-left: 82px; }
.tree-root-row { padding-left: 44px; }
.tree-noarrow { padding-left: 116px; }
.twist { width: 16px; height: 14px; flex: none; }
.twist-open { width: 14px; height: 22px; flex: none; margin-right: 20px; }
.root-outer { margin-left: 20px; width: 384px; height: 40px; display: flex; align-items: center; background: #cdcdcd; padding-left: 4px; }
.root-inner { width: 330px; height: 32px; display: flex; align-items: center; background: #7f7f7f; padding-left: 8px; }
.ic-bulb { width: 20px; height: 28px; flex: none; }
.ic-comp { width: 26px; height: 26px; flex: none; margin-left: 27px; }
.root-name { margin-left: 31px; font-size: 23.400px; font-weight: 700; color: #fafafa; white-space: nowrap; }
.radio { width: 25px; height: 26px; margin-left: 9px; border-radius: 50%; background: radial-gradient(circle, #333 0 4px, #eee 5px 10px, #888 11px 12px, transparent 13px); }
.node { height: 40px; display: flex; align-items: center; background: #cdcdcd; padding: 0 19px 1px 7px; }
.ic-folder { width: 30px; height: 26px; flex: none; }
.ic-units { width: 30px; height: 30px; flex: none; }
.node-text { margin-left: 29px; font-size: 22.500px; color: #444; white-space: nowrap; }
.ic-bulb-node { margin-left: 5px; }
.ic-folder-lit { margin-left: 25px; }
.ic-folder-lit + .node-text { margin-left: 29px; }

.dock { flex: none; height: 48px; margin: auto 0 8px 8px; display: flex; }
.comments { width: 590px; display: flex; align-items: center; background: #d0d0d0; border: 2px solid #a8a8a8; border-right: 0; padding: 0 14px 3px 28px; }
.comments .dock-title { font-size: 21.900px; }
.orbit { width: 65px; display: flex; align-items: center; background: #4a80b4; padding-left: 8px; }
.nav-ic { width: 30px; height: 34px; flex: none; }
.nav-panel { width: 224px; display: flex; align-items: center; gap: 22px; background: #cacaca; padding-left: 9px; }
.nav-panel .arrow { margin-left: -11px; }
.view-panel { width: 187px; margin-left: 14px; display: flex; align-items: center; gap: 5px; background: #cacaca; padding-left: 8px; }
.view-panel .arrow + .nav-ic { margin-left: 4px; }

.timeline { flex: none; height: 90px; display: flex; align-items: flex-start; background: #cbcbcb; padding: 16px 9px 0 22px; }
.tl-btn { width: 24px; height: 30px; flex: none; margin: 12px 26px 0 0; }
.tl-track { width: 150px; height: 66px; flex: none; margin-left: 21px; }
.tl-gear { width: 30px; height: 30px; flex: none; margin: 9px 0 0 auto; }
```
